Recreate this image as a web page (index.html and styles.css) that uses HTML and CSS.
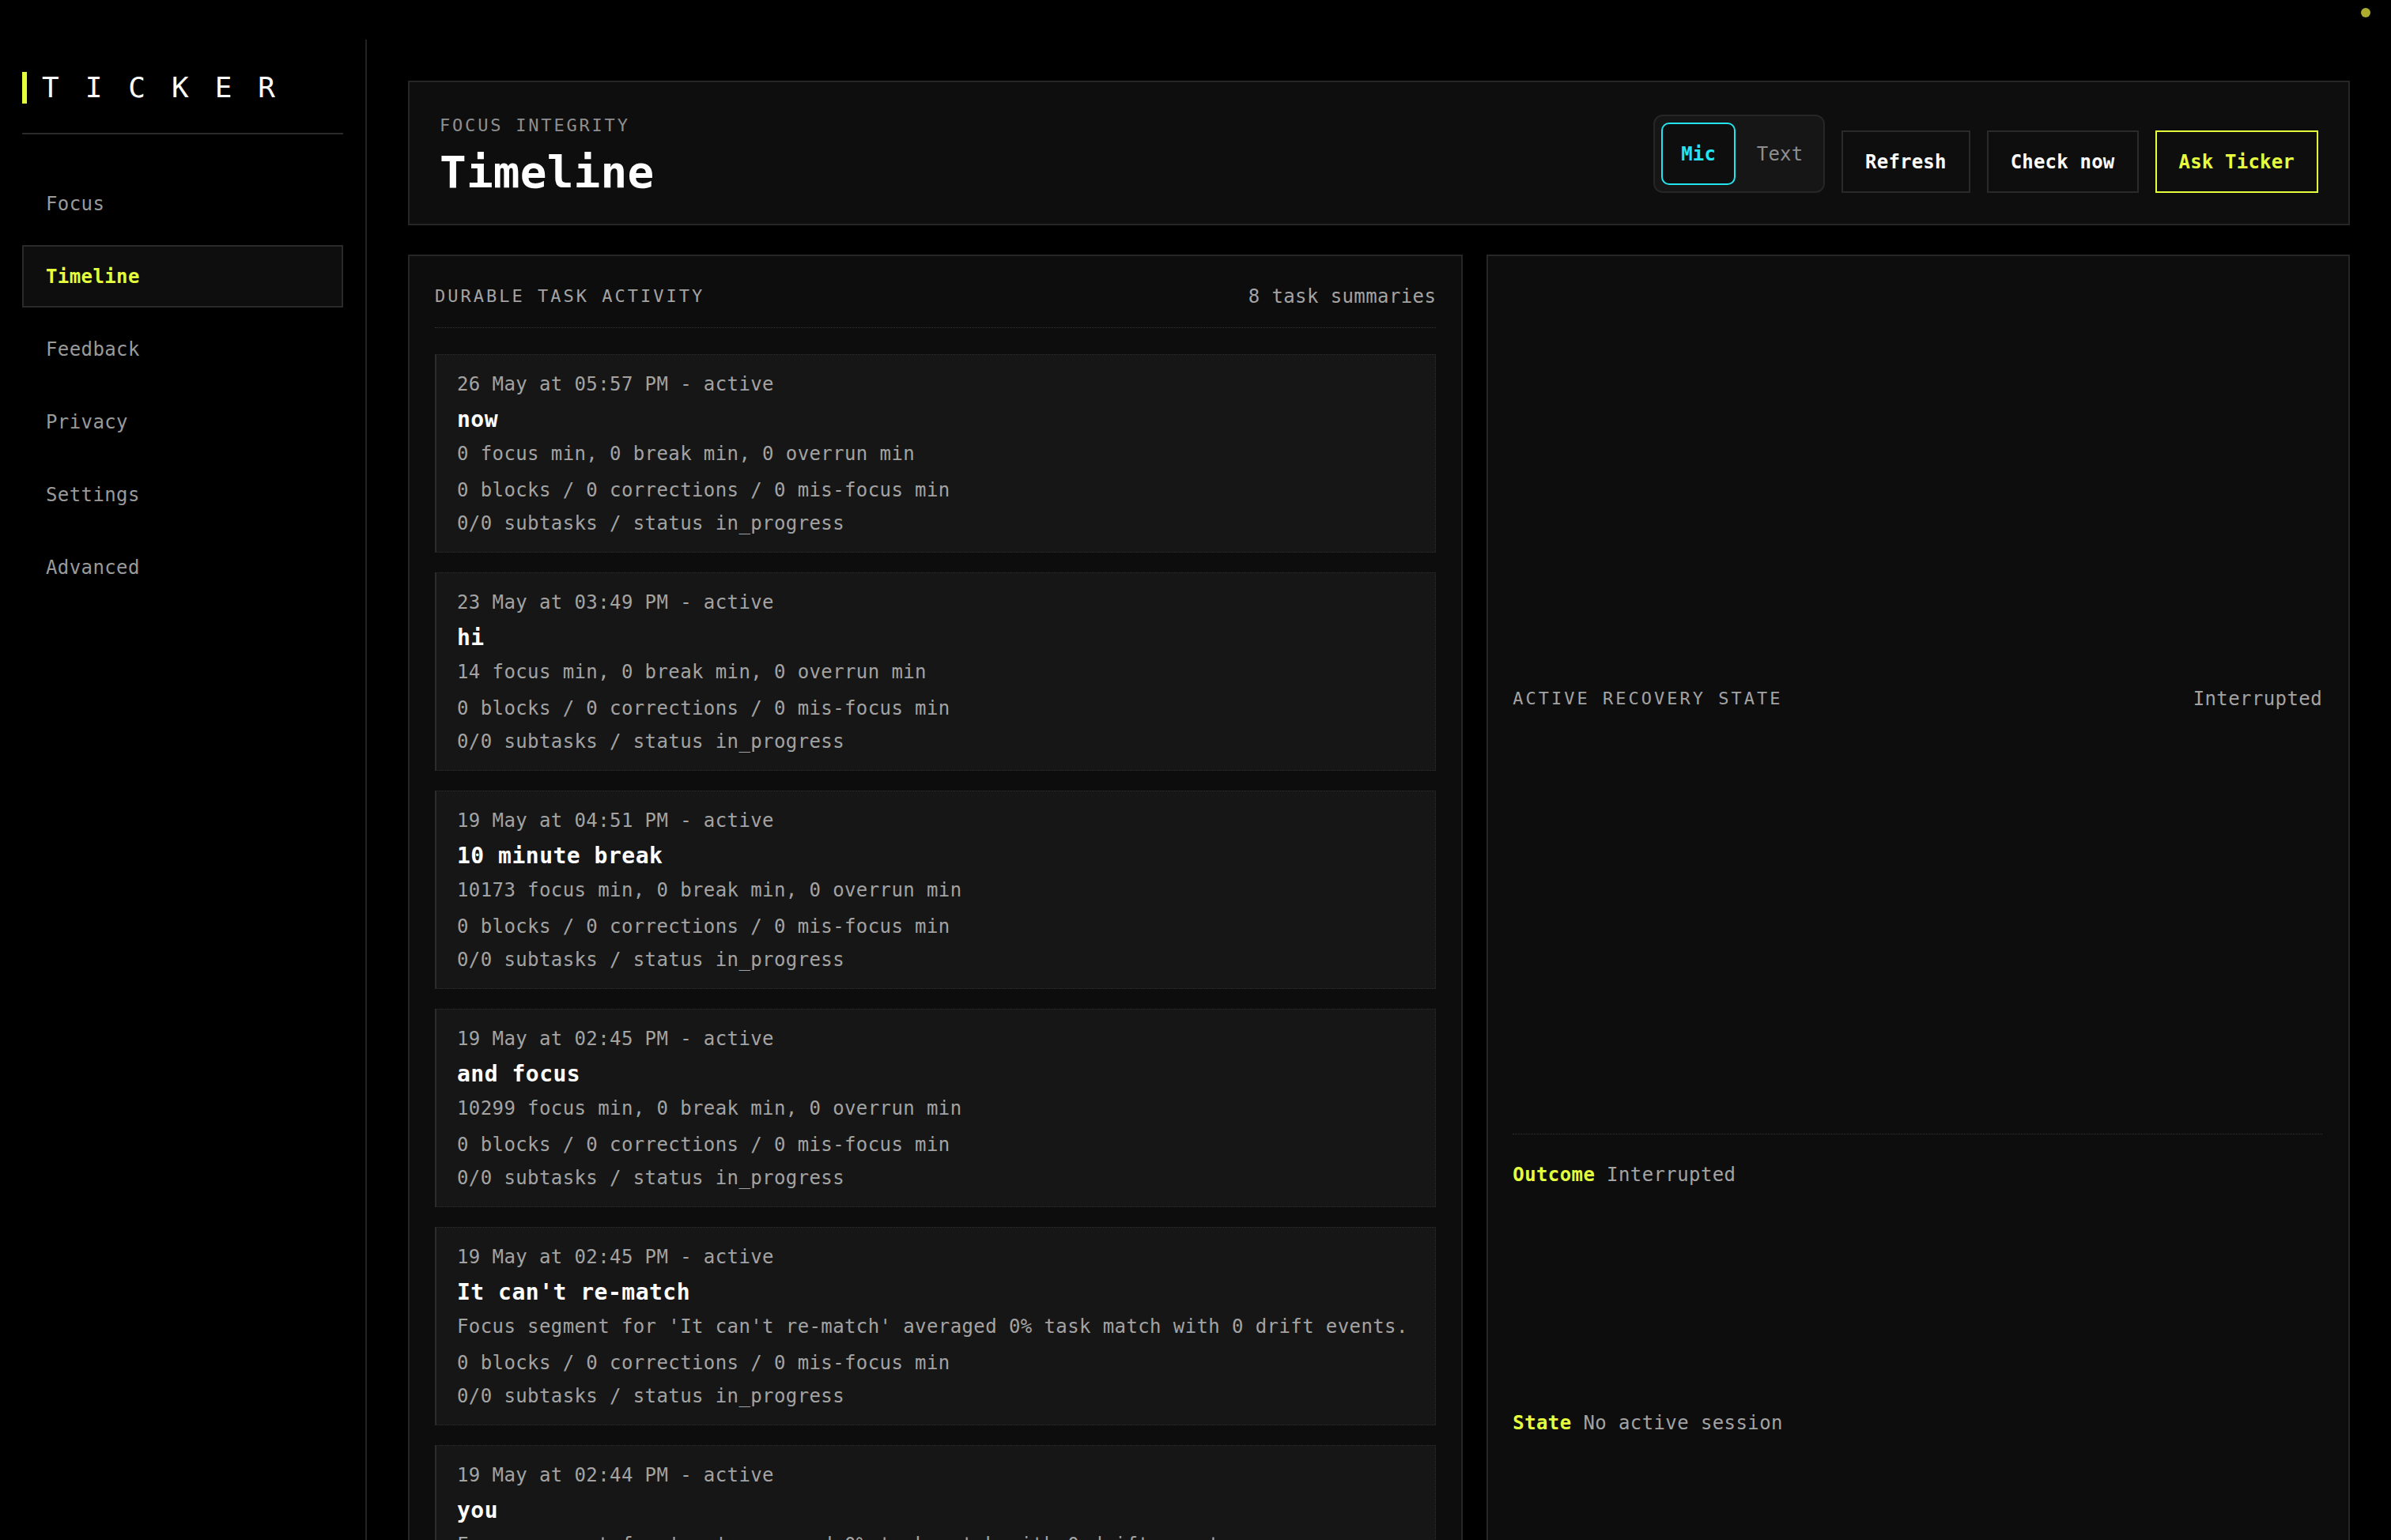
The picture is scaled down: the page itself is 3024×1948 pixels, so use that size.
FILE: index.html
```html
<!DOCTYPE html>
<html lang="en">
<head>
  <meta charset="UTF-8">
  <meta name="viewport" content="width=device-width, initial-scale=1.0">
  <title>Ticker - Timeline</title>
  <link rel="stylesheet" href="styles.css">
</head>
<body>
  <span class="status-dot"></span>
  <div class="app">
    <aside class="sidebar">
      <div class="logo">
        <span class="logo-bar"></span>
        <span class="logo-text">TICKER</span>
      </div>
      <nav class="nav">
        <a class="nav-item">Focus</a>
        <a class="nav-item active">Timeline</a>
        <a class="nav-item">Feedback</a>
        <a class="nav-item">Privacy</a>
        <a class="nav-item">Settings</a>
        <a class="nav-item">Advanced</a>
      </nav>
    </aside>

    <main class="main">
      <header class="page-head">
        <div class="page-title">
          <div class="eyebrow">FOCUS INTEGRITY</div>
          <h1>Timeline</h1>
        </div>
        <div class="actions">
          <div class="segmented">
            <button class="seg-btn selected">Mic</button>
            <button class="seg-btn">Text</button>
          </div>
          <button class="btn">Refresh</button>
          <button class="btn">Check now</button>
          <button class="btn primary">Ask Ticker</button>
        </div>
      </header>

      <div class="columns">
        <section class="panel activity">
          <div class="panel-head">
            <span class="section-label">DURABLE TASK ACTIVITY</span>
            <span class="muted">8 task summaries</span>
          </div>
          <div class="task-list">
            <div class="task">
              <div class="task-date">26 May at 05:57 PM - active</div>
              <div class="task-title">now</div>
              <div class="task-line">0 focus min, 0 break min, 0 overrun min</div>
              <div class="task-line spaced">0 blocks / 0 corrections / 0 mis-focus min</div>
              <div class="task-line">0/0 subtasks / status in_progress</div>
            </div>
            <div class="task">
              <div class="task-date">23 May at 03:49 PM - active</div>
              <div class="task-title">hi</div>
              <div class="task-line">14 focus min, 0 break min, 0 overrun min</div>
              <div class="task-line spaced">0 blocks / 0 corrections / 0 mis-focus min</div>
              <div class="task-line">0/0 subtasks / status in_progress</div>
            </div>
            <div class="task">
              <div class="task-date">19 May at 04:51 PM - active</div>
              <div class="task-title">10 minute break</div>
              <div class="task-line">10173 focus min, 0 break min, 0 overrun min</div>
              <div class="task-line spaced">0 blocks / 0 corrections / 0 mis-focus min</div>
              <div class="task-line">0/0 subtasks / status in_progress</div>
            </div>
            <div class="task">
              <div class="task-date">19 May at 02:45 PM - active</div>
              <div class="task-title">and focus</div>
              <div class="task-line">10299 focus min, 0 break min, 0 overrun min</div>
              <div class="task-line spaced">0 blocks / 0 corrections / 0 mis-focus min</div>
              <div class="task-line">0/0 subtasks / status in_progress</div>
            </div>
            <div class="task">
              <div class="task-date">19 May at 02:45 PM - active</div>
              <div class="task-title">It can't re-match</div>
              <div class="task-line">Focus segment for 'It can't re-match' averaged 0% task match with 0 drift events.</div>
              <div class="task-line spaced">0 blocks / 0 corrections / 0 mis-focus min</div>
              <div class="task-line">0/0 subtasks / status in_progress</div>
            </div>
            <div class="task">
              <div class="task-date">19 May at 02:44 PM - active</div>
              <div class="task-title">you</div>
              <div class="task-line">Focus segment for 'you' averaged 0% task match with 0 drift events.</div>
              <div class="task-line spaced">0 blocks / 0 corrections / 0 mis-focus min</div>
              <div class="task-line">0/0 subtasks / status in_progress</div>
            </div>
            <div class="task">
              <div class="task-date">19 May at 02:41 PM - active</div>
              <div class="task-title">match test</div>
              <div class="task-line">0 focus min, 0 break min, 0 overrun min</div>
              <div class="task-line spaced">0 blocks / 0 corrections / 0 mis-focus min</div>
              <div class="task-line">0/0 subtasks / status in_progress</div>
            </div>
            <div class="task">
              <div class="task-date">19 May at 02:38 PM - active</div>
              <div class="task-title">focus</div>
              <div class="task-line">0 focus min, 0 break min, 0 overrun min</div>
              <div class="task-line spaced">0 blocks / 0 corrections / 0 mis-focus min</div>
              <div class="task-line">0/0 subtasks / status in_progress</div>
            </div>
          </div>
        </section>

        <section class="panel recovery">
          <div class="recovery-head">
            <span class="section-label">ACTIVE RECOVERY STATE</span>
            <span class="muted">Interrupted</span>
          </div>
          <div class="recovery-row">
            <span class="key">Outcome</span> <span class="muted">Interrupted</span>
          </div>
          <div class="recovery-row">
            <span class="key">State</span> <span class="muted">No active session</span>
          </div>
        </section>
      </div>
    </main>
  </div>
</body>
</html>
```

FILE: styles.css
```css
html, body {
  height: 100%;
}
body {
  margin: 0;
  background-color: #000;
  color: #fff;
  font-family: "DejaVu Sans Mono", "Liberation Mono", monospace;
  font-size: 24px;
  letter-spacing: 0.4px;
  overflow: hidden;
}
.status-dot {
  position: fixed;
  top: 10px;
  right: 26px;
  width: 12px;
  height: 12px;
  border-radius: 50%;
  background-color: #acac2e;
}
.app {
  display: grid;
  grid-template-columns: 464px 1fr;
  height: 100vh;
  padding-top: 50px;
  box-sizing: border-box;
}

/* sidebar */
.sidebar {
  border-right: 2px solid #222;
  padding: 41px 28px 0 28px;
}
.logo {
  display: flex;
  align-items: center;
  gap: 19px;
  padding-bottom: 37px;
  border-bottom: 2px solid #2a2a2a;
}
.logo-bar {
  width: 6px;
  height: 40px;
  background-color: #e6ff3d;
}
.logo-text {
  font-size: 36px;
  line-height: 40px;
  letter-spacing: 33px;
  color: #fff;
}
.nav {
  display: flex;
  flex-direction: column;
  gap: 13px;
  margin-top: 48px;
}
.nav-item {
  display: flex;
  align-items: center;
  height: 79px;
  box-sizing: border-box;
  padding-left: 28px;
  border: 2px solid transparent;
  color: #9a9a9a;
  cursor: pointer;
}
.nav-item.active {
  border-color: #2a2a2a;
  background-color: #0e0e0e;
  color: #e6ff3d;
  font-weight: bold;
}

/* main */
.main {
  padding: 52px;
  overflow-y: auto;
  scrollbar-width: none;
}
.main::-webkit-scrollbar {
  display: none;
}
.page-head {
  display: flex;
  justify-content: space-between;
  align-items: flex-end;
  padding: 40px 38px 39px 38px;
  border: 2px solid #262626;
  background-color: #0e0e0e;
}
.eyebrow {
  font-size: 22px;
  line-height: 30px;
  letter-spacing: 2.8px;
  color: #8e8e8e;
}
h1 {
  margin: 18px 0 0 0;
  font-size: 56px;
  line-height: 52px;
  font-weight: bold;
  letter-spacing: 0.2px;
}
.actions {
  display: flex;
  align-items: flex-end;
  gap: 21px;
}
.segmented {
  display: flex;
  gap: 9px;
  padding: 8px;
  border: 2px solid #262626;
  border-radius: 12px;
  background-color: #161616;
}
button {
  font-family: inherit;
  font-size: 24px;
  letter-spacing: 0.2px;
  cursor: pointer;
}
.seg-btn {
  width: 94px;
  height: 79px;
  padding: 0;
  border: 2px solid transparent;
  border-radius: 10px;
  background: transparent;
  color: #8e8e8e;
}
.seg-btn.selected {
  border-color: #22e5f0;
  background-color: #0e0e0e;
  color: #22e5f0;
  font-weight: bold;
}
.btn {
  height: 79px;
  padding: 0 28px;
  border: 2px solid #2a2a2a;
  background-color: #0e0e0e;
  color: #fff;
  font-weight: bold;
}
.btn.primary {
  border-color: #e6ff3d;
  color: #e6ff3d;
}

.columns {
  display: grid;
  grid-template-columns: 11fr 9fr;
  gap: 30px;
  margin-top: 37px;
}
.panel {
  border: 2px solid #262626;
  background-color: #0d0d0d;
}
.activity {
  padding: 33px 32px;
}
.panel-head {
  display: flex;
  justify-content: space-between;
  line-height: 36px;
  padding-bottom: 21px;
  border-bottom: 1px dotted #333;
}
.section-label {
  font-size: 22px;
  letter-spacing: 3px;
  color: #a3a3a3;
}
.muted {
  color: #a3a3a3;
}
.task-list {
  display: flex;
  flex-direction: column;
  gap: 25px;
  margin-top: 33px;
}
.task {
  padding: 19px 26px 18px 26px;
  border: 1px dotted #2e2e2e;
  border-left: 2px solid #2c2c2c;
  background-color: #161616;
  line-height: 36px;
}
.task-date {
  color: #a3a3a3;
}
.task-title {
  margin-top: 8px;
  font-size: 28px;
  line-height: 38px;
  font-weight: bold;
  letter-spacing: 0.5px;
}
.task-line {
  margin-top: 6px;
  color: #a3a3a3;
}
.task-line.spaced {
  margin-top: 10px;
}

.recovery {
  padding: 33px 33px 33px 31px;
  line-height: 36px;
}
.recovery-head {
  display: flex;
  justify-content: space-between;
  align-items: center;
  height: 1078px;
  box-sizing: border-box;
  padding-bottom: 23px;
  border-bottom: 1px dotted #333;
}
.recovery-row {
  min-height: 314px;
  box-sizing: border-box;
  padding-top: 33px;
}
.key {
  color: #e6ff3d;
  font-weight: bold;
}
```
